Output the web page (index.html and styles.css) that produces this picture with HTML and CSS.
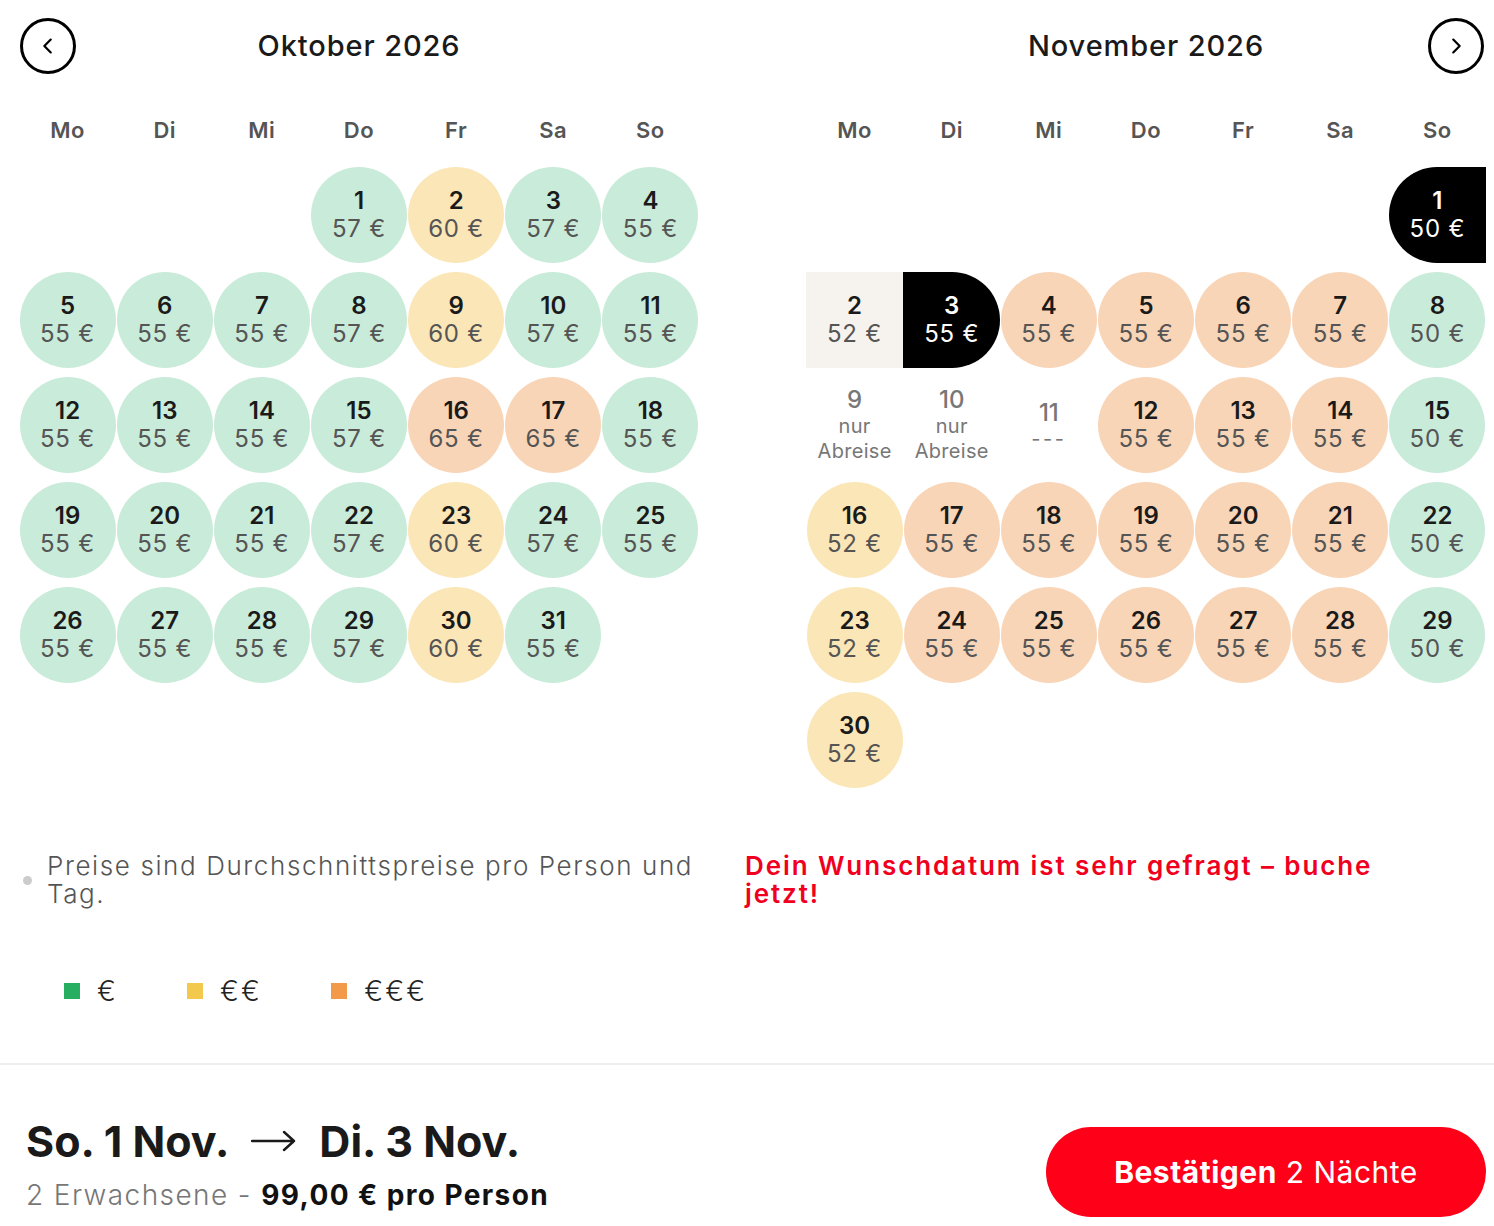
FILE: index.html
```html
<!DOCTYPE html>
<html lang="de">
<head>
    <meta charset="UTF-8">
    <meta name="viewport" content="width=device-width, initial-scale=1.0">
    <title>Reisedatum wählen</title>
    <link rel="stylesheet" href="styles.css">
</head>
<body>
    <div class="calendars">
        <!-- Oktober -->
        <div class="month">
            <div class="month-head">
                <button class="nav" aria-label="Vorheriger Monat">
                    <svg width="22" height="22" viewBox="0 0 24 24"><polyline points="15 5 8 12 15 19" fill="none" stroke="#000" stroke-width="2.4" stroke-linecap="round" stroke-linejoin="round"/></svg>
                </button>
                <h2>Oktober 2026</h2>
                <span></span>
            </div>
            <div class="weekdays">
                <span>Mo</span><span>Di</span><span>Mi</span><span>Do</span><span>Fr</span><span>Sa</span><span>So</span>
            </div>
            <div class="days">
                <div></div><div></div><div></div>
                <div class="day low"><b>1</b><span>57 €</span></div>
                <div class="day mid"><b>2</b><span>60 €</span></div>
                <div class="day low"><b>3</b><span>57 €</span></div>
                <div class="day low"><b>4</b><span>55 €</span></div>

                <div class="day low"><b>5</b><span>55 €</span></div>
                <div class="day low"><b>6</b><span>55 €</span></div>
                <div class="day low"><b>7</b><span>55 €</span></div>
                <div class="day low"><b>8</b><span>57 €</span></div>
                <div class="day mid"><b>9</b><span>60 €</span></div>
                <div class="day low"><b>10</b><span>57 €</span></div>
                <div class="day low"><b>11</b><span>55 €</span></div>

                <div class="day low"><b>12</b><span>55 €</span></div>
                <div class="day low"><b>13</b><span>55 €</span></div>
                <div class="day low"><b>14</b><span>55 €</span></div>
                <div class="day low"><b>15</b><span>57 €</span></div>
                <div class="day high"><b>16</b><span>65 €</span></div>
                <div class="day high"><b>17</b><span>65 €</span></div>
                <div class="day low"><b>18</b><span>55 €</span></div>

                <div class="day low"><b>19</b><span>55 €</span></div>
                <div class="day low"><b>20</b><span>55 €</span></div>
                <div class="day low"><b>21</b><span>55 €</span></div>
                <div class="day low"><b>22</b><span>57 €</span></div>
                <div class="day mid"><b>23</b><span>60 €</span></div>
                <div class="day low"><b>24</b><span>57 €</span></div>
                <div class="day low"><b>25</b><span>55 €</span></div>

                <div class="day low"><b>26</b><span>55 €</span></div>
                <div class="day low"><b>27</b><span>55 €</span></div>
                <div class="day low"><b>28</b><span>55 €</span></div>
                <div class="day low"><b>29</b><span>57 €</span></div>
                <div class="day mid"><b>30</b><span>60 €</span></div>
                <div class="day low"><b>31</b><span>55 €</span></div>
            </div>
        </div>

        <!-- November -->
        <div class="month">
            <div class="month-head">
                <span></span>
                <h2>November 2026</h2>
                <button class="nav next" aria-label="Nächster Monat">
                    <svg width="22" height="22" viewBox="0 0 24 24"><polyline points="9 5 16 12 9 19" fill="none" stroke="#000" stroke-width="2.4" stroke-linecap="round" stroke-linejoin="round"/></svg>
                </button>
            </div>
            <div class="weekdays">
                <span>Mo</span><span>Di</span><span>Mi</span><span>Do</span><span>Fr</span><span>Sa</span><span>So</span>
            </div>
            <div class="days">
                <div></div><div></div><div></div><div></div><div></div><div></div>
                <div class="day start"><b>1</b><span>50 €</span></div>

                <div class="day range"><b>2</b><span>52 €</span></div>
                <div class="day end"><b>3</b><span>55 €</span></div>
                <div class="day high"><b>4</b><span>55 €</span></div>
                <div class="day high"><b>5</b><span>55 €</span></div>
                <div class="day high"><b>6</b><span>55 €</span></div>
                <div class="day high"><b>7</b><span>55 €</span></div>
                <div class="day low"><b>8</b><span>50 €</span></div>

                <div class="day off"><b>9</b><small>nur<br>Abreise</small></div>
                <div class="day off"><b>10</b><small>nur<br>Abreise</small></div>
                <div class="day off closed"><b>11</b><small>---</small></div>
                <div class="day high"><b>12</b><span>55 €</span></div>
                <div class="day high"><b>13</b><span>55 €</span></div>
                <div class="day high"><b>14</b><span>55 €</span></div>
                <div class="day low"><b>15</b><span>50 €</span></div>

                <div class="day mid"><b>16</b><span>52 €</span></div>
                <div class="day high"><b>17</b><span>55 €</span></div>
                <div class="day high"><b>18</b><span>55 €</span></div>
                <div class="day high"><b>19</b><span>55 €</span></div>
                <div class="day high"><b>20</b><span>55 €</span></div>
                <div class="day high"><b>21</b><span>55 €</span></div>
                <div class="day low"><b>22</b><span>50 €</span></div>

                <div class="day mid"><b>23</b><span>52 €</span></div>
                <div class="day high"><b>24</b><span>55 €</span></div>
                <div class="day high"><b>25</b><span>55 €</span></div>
                <div class="day high"><b>26</b><span>55 €</span></div>
                <div class="day high"><b>27</b><span>55 €</span></div>
                <div class="day high"><b>28</b><span>55 €</span></div>
                <div class="day low"><b>29</b><span>50 €</span></div>

                <div class="day mid"><b>30</b><span>52 €</span></div>
            </div>
        </div>
    </div>

    <div class="notes">
        <ul class="info">
            <li>Preise sind Durchschnittspreise pro Person und Tag.</li>
        </ul>
        <p class="urgent">Dein Wunschdatum ist sehr gefragt – buche jetzt!</p>
    </div>

    <div class="legend">
        <span><i class="sq green"></i>€</span>
        <span><i class="sq yellow"></i>€€</span>
        <span><i class="sq orange"></i>€€€</span>
    </div>

    <div class="summary">
        <div class="trip">
            <div class="dates">
                <span>So. 1 Nov.</span>
                <svg class="arrow" width="46" height="24" viewBox="0 0 46 24"><path d="M1 12 H43 M33 3 L43 12 L33 21" fill="none" stroke="#1a1a1a" stroke-width="2.4" stroke-linecap="round" stroke-linejoin="round"/></svg>
                <span>Di. 3 Nov.</span>
            </div>
            <div class="price"><span class="guests">2 Erwachsene - </span><strong>99,00 € pro Person</strong></div>
        </div>
        <button class="confirm"><strong>Bestätigen</strong> 2 Nächte</button>
    </div>
</body>
</html>
```

FILE: styles.css
```css
body {
    margin: 0;
    font-family: Inter, "Noto Sans", sans-serif;
    color: #1a1a1a;
    background: #fff;
}

.calendars {
    display: flex;
    gap: 107px;
    padding: 18px 0 0 19px;
}
.month {
    width: 680px;
}
.month-head {
    display: grid;
    grid-template-columns: 56px 1fr 56px;
    align-items: center;
    height: 56px;
}
.month-head h2 {
    margin: 0 0 2px;
    text-align: center;
    font-size: 29px;
    font-weight: 500;
    letter-spacing: 0.9px;
}
.nav {
    width: 56px;
    height: 56px;
    margin-left: 1px;
    border: 3px solid #000;
    border-radius: 50%;
    background: #fff;
    display: flex;
    align-items: center;
    justify-content: center;
    padding: 0;
    cursor: pointer;
}
.nav.next {
    margin-left: -2px;
}

.weekdays {
    display: grid;
    grid-template-columns: repeat(7, 1fr);
    margin-top: 41px;
    height: 30px;
    line-height: 30px;
    text-align: center;
    font-size: 22px;
    font-weight: 600;
    letter-spacing: 0.5px;
    color: #555;
}

.days {
    display: grid;
    grid-template-columns: repeat(7, 1fr);
    row-gap: 9px;
    margin-top: 22px;
}
.days > div {
    height: 96px;
}
.day {
    display: flex;
    flex-direction: column;
    align-items: center;
    justify-content: center;
    text-align: center;
}
.day b {
    font-size: 24px;
    font-weight: 600;
    line-height: 28px;
    color: #1a1a1a;
}
.day span {
    font-size: 24px;
    line-height: 28px;
    letter-spacing: 0.8px;
    color: #555;
}
.day.low,
.day.mid,
.day.high {
    width: 96px;
    margin: 0 auto;
    border-radius: 50%;
}
.day.low { background: #c9ebd9; }
.day.mid { background: #fbe6b7; }
.day.high { background: #f9d5b8; }

.day.start,
.day.end {
    background: #000;
}
.day.start b, .day.start span,
.day.end b, .day.end span {
    color: #fff;
}
.day.start {
    border-radius: 48px 0 0 48px;
}
.day.end {
    border-radius: 0 48px 48px 0;
}
.day.range {
    background: #f6f3ee;
}
.day.off b {
    color: #777;
    font-weight: 500;
}
.day.off small {
    font-size: 20px;
    line-height: 25px;
    letter-spacing: 0.3px;
    color: #777;
}
.day.closed small {
    letter-spacing: 2.5px;
}

.notes {
    display: flex;
    gap: 46px;
    padding-left: 19px;
    margin-top: 64px;
}
.info {
    width: 680px;
    margin: 0;
    padding: 0 0 0 28px;
    box-sizing: border-box;
    list-style: none;
}
.info li {
    position: relative;
    font-size: 26px;
    font-weight: 300;
    line-height: 28px;
    letter-spacing: 1.6px;
    color: #555;
}
.info li::before {
    content: "";
    position: absolute;
    left: -24px;
    top: 24px;
    width: 9px;
    height: 9px;
    border-radius: 50%;
    background: #ccc;
}
.urgent {
    width: 650px;
    margin: 0;
    font-size: 26px;
    font-weight: 600;
    line-height: 28px;
    letter-spacing: 1.9px;
    color: #f0001e;
}

.legend {
    display: flex;
    gap: 69px;
    padding-left: 64px;
    margin-top: 68px;
    font-size: 28px;
    font-weight: 300;
    line-height: 30px;
    letter-spacing: 2.2px;
    color: #222;
}
.legend span {
    display: flex;
    align-items: center;
    gap: 17px;
}
.sq {
    width: 16px;
    height: 16px;
}
.sq.green { background: #27ae60; }
.sq.yellow { background: #f2c94c; }
.sq.orange { background: #f2994a; }

.summary {
    border-top: 2px solid #eee;
    margin-top: 57px;
    padding: 51px 8px 0 26px;
    display: flex;
    justify-content: space-between;
    align-items: flex-start;
}
.dates {
    display: flex;
    align-items: center;
    gap: 22px;
    font-size: 43px;
    font-weight: 700;
    line-height: 50px;
    color: #1a1a1a;
}
.price {
    margin-top: 11px;
    font-size: 28px;
    line-height: 36px;
    letter-spacing: 1.4px;
}
.guests {
    font-weight: 300;
    color: #777;
}
.price strong {
    font-weight: 700;
    color: #111;
}
.confirm {
    margin-top: 11px;
    width: 440px;
    height: 90px;
    border: none;
    border-radius: 45px;
    background: #ff0019;
    color: #fff;
    font-family: inherit;
    font-size: 30px;
    font-weight: 400;
    letter-spacing: 0.5px;
    cursor: pointer;
}
.confirm strong {
    font-weight: 700;
}
```
